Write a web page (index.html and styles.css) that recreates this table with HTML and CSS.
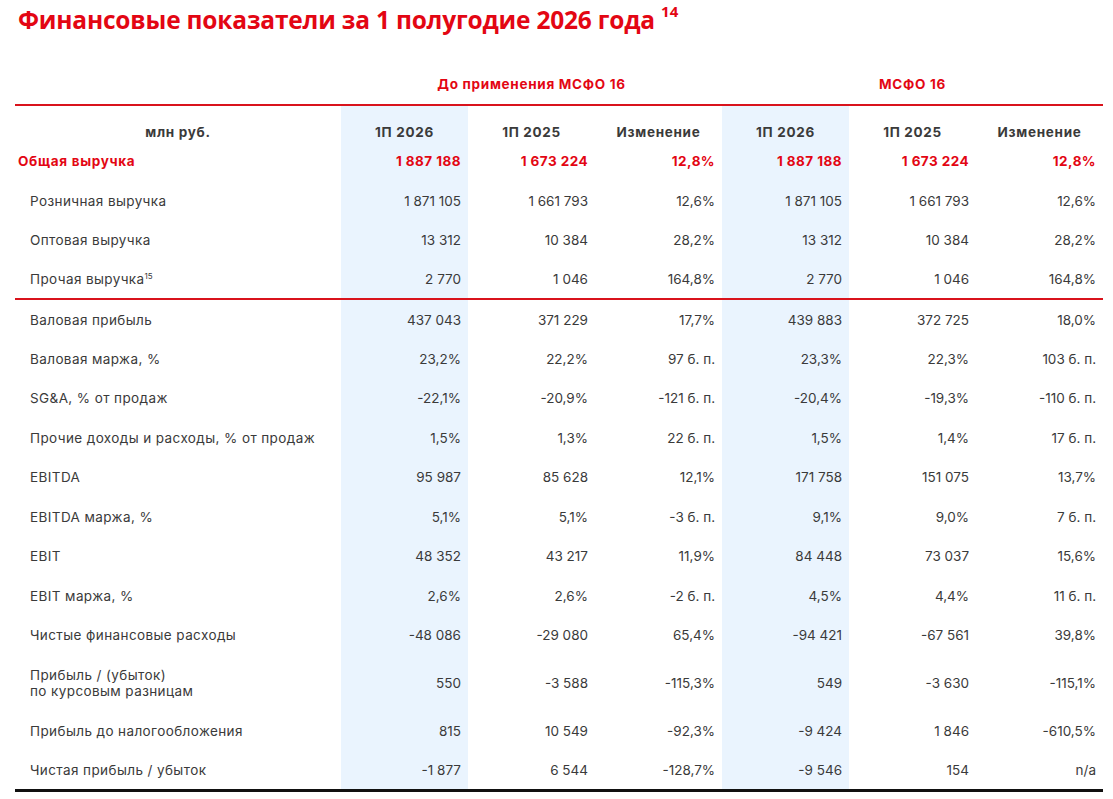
FILE: index.html
```html
<!DOCTYPE html>
<html lang="ru">
<head>
<meta charset="utf-8">
<title>Финансовые показатели</title>
<link rel="stylesheet" href="styles.css">
</head>
<body>
<h1 class="title">Финансовые показатели за 1 полугодие 2026 года <sup class="fn">14</sup></h1>
<table class="fin">
  <colgroup>
    <col class="c-label">
    <col class="c-num"><col class="c-num"><col class="c-num">
    <col class="c-num"><col class="c-num"><col class="c-num">
  </colgroup>
  <thead>
    <tr class="group">
      <th></th>
      <th colspan="3">До применения МСФО 16</th>
      <th colspan="3">МСФО 16</th>
    </tr>
    <tr class="head">
      <th class="unit">млн руб.</th>
      <th class="hl">1П 2026</th><th>1П 2025</th><th>Изменение</th>
      <th class="hl">1П 2026</th><th>1П 2025</th><th>Изменение</th>
    </tr>
  </thead>
  <tbody>
    <tr class="total">
      <td class="lbl main">Общая выручка</td>
      <td class="hl">1 887 188</td><td>1 673 224</td><td>12,8%</td>
      <td class="hl">1 887 188</td><td>1 673 224</td><td>12,8%</td>
    </tr>
    <tr>
      <td class="lbl">Розничная выручка</td>
      <td class="hl">1 871 105</td><td>1 661 793</td><td>12,6%</td>
      <td class="hl">1 871 105</td><td>1 661 793</td><td>12,6%</td>
    </tr>
    <tr>
      <td class="lbl">Оптовая выручка</td>
      <td class="hl">13 312</td><td>10 384</td><td>28,2%</td>
      <td class="hl">13 312</td><td>10 384</td><td>28,2%</td>
    </tr>
    <tr class="sep">
      <td class="lbl">Прочая выручка<sup class="sm">15</sup></td>
      <td class="hl">2 770</td><td>1 046</td><td>164,8%</td>
      <td class="hl">2 770</td><td>1 046</td><td>164,8%</td>
    </tr>
    <tr>
      <td class="lbl">Валовая прибыль</td>
      <td class="hl">437 043</td><td>371 229</td><td>17,7%</td>
      <td class="hl">439 883</td><td>372 725</td><td>18,0%</td>
    </tr>
    <tr>
      <td class="lbl">Валовая маржа, %</td>
      <td class="hl">23,2%</td><td>22,2%</td><td>97 б. п.</td>
      <td class="hl">23,3%</td><td>22,3%</td><td>103 б. п.</td>
    </tr>
    <tr>
      <td class="lbl">SG&amp;A, % от продаж</td>
      <td class="hl">-22,1%</td><td>-20,9%</td><td>-121 б. п.</td>
      <td class="hl">-20,4%</td><td>-19,3%</td><td>-110 б. п.</td>
    </tr>
    <tr>
      <td class="lbl">Прочие доходы и расходы, % от продаж</td>
      <td class="hl">1,5%</td><td>1,3%</td><td>22 б. п.</td>
      <td class="hl">1,5%</td><td>1,4%</td><td>17 б. п.</td>
    </tr>
    <tr>
      <td class="lbl">EBITDA</td>
      <td class="hl">95 987</td><td>85 628</td><td>12,1%</td>
      <td class="hl">171 758</td><td>151 075</td><td>13,7%</td>
    </tr>
    <tr>
      <td class="lbl">EBITDA маржа, %</td>
      <td class="hl">5,1%</td><td>5,1%</td><td>-3 б. п.</td>
      <td class="hl">9,1%</td><td>9,0%</td><td>7 б. п.</td>
    </tr>
    <tr>
      <td class="lbl">EBIT</td>
      <td class="hl">48 352</td><td>43 217</td><td>11,9%</td>
      <td class="hl">84 448</td><td>73 037</td><td>15,6%</td>
    </tr>
    <tr>
      <td class="lbl">EBIT маржа, %</td>
      <td class="hl">2,6%</td><td>2,6%</td><td>-2 б. п.</td>
      <td class="hl">4,5%</td><td>4,4%</td><td>11 б. п.</td>
    </tr>
    <tr>
      <td class="lbl">Чистые финансовые расходы</td>
      <td class="hl">-48 086</td><td>-29 080</td><td>65,4%</td>
      <td class="hl">-94 421</td><td>-67 561</td><td>39,8%</td>
    </tr>
    <tr class="tall">
      <td class="lbl">Прибыль / (убыток)<br>по курсовым разницам</td>
      <td class="hl">550</td><td>-3 588</td><td>-115,3%</td>
      <td class="hl">549</td><td>-3 630</td><td>-115,1%</td>
    </tr>
    <tr>
      <td class="lbl">Прибыль до налогообложения</td>
      <td class="hl">815</td><td>10 549</td><td>-92,3%</td>
      <td class="hl">-9 424</td><td>1 846</td><td>-610,5%</td>
    </tr>
    <tr class="last">
      <td class="lbl">Чистая прибыль / убыток</td>
      <td class="hl">-1 877</td><td>6 544</td><td>-128,7%</td>
      <td class="hl">-9 546</td><td>154</td><td>n/a</td>
    </tr>
  </tbody>
</table>
</body>
</html>
```

FILE: styles.css
```css
html, body {
  margin: 0;
  padding: 0;
  background: #ffffff;
}

body {
  font-family: "Inter", "Open Sans", "Liberation Sans", sans-serif;
  color: #3a3a3a;
}

.title {
  margin: 0;
  padding: 4px 0 0 18px;
  height: 56px;
  box-sizing: border-box;
  font-family: "Open Sans", "Liberation Sans", sans-serif;
  font-weight: 700;
  font-size: 24.5px;
  line-height: 32px;
  color: #e30613;
  letter-spacing: -0.2px;
}

.fn {
  font-size: 15px;
  vertical-align: 0;
  position: relative;
  top: -12px;
  letter-spacing: 0;
}

.fin {
  margin-left: 15px;
  border-collapse: collapse;
  table-layout: fixed;
  width: 1088px;
  font-size: 13.5px;
}

.c-label { width: 326px; }
.c-num { width: 127px; }

.fin th, .fin td {
  padding: 0 7px 0 0;
  text-align: right;
  white-space: nowrap;
}

.group th {
  height: 49px;
  box-sizing: border-box;
  padding: 20px 0 0 0;
  text-align: center;
  vertical-align: top;
  color: #e30613;
  font-weight: 700;
  font-size: 13.5px;
  letter-spacing: 0.7px;
  border-bottom: 2px solid #d9131c;
}

.head th {
  height: 36px;
  box-sizing: border-box;
  padding: 18px 0 0 0;
  vertical-align: top;
  text-align: center;
  font-weight: 700;
  letter-spacing: 0.7px;
  color: #3a3a3a;
}

.hl {
  background: #eaf4fe;
}

.fin td {
  height: 39px;
  box-sizing: border-box;
  vertical-align: middle;
}

.fin tbody tr:nth-child(odd) td {
  height: 40px;
}

.lbl {
  text-align: left !important;
  padding-left: 15px !important;
  letter-spacing: 0.4px;
}

.lbl.main {
  padding-left: 3px !important;
}

.total td {
  color: #e30613;
  font-weight: 700;
  letter-spacing: 0.45px;
}

.total td.lbl {
  letter-spacing: 0.7px;
}

.sep td {
  border-bottom: 2px solid #d9131c;
}

.fin tbody tr.tall td {
  height: 56px;
  line-height: 16px;
}

.last td {
  border-bottom: 3px solid #111111;
}

.sm {
  font-size: 8px;
  vertical-align: 0;
  position: relative;
  top: -5px;
  letter-spacing: 0;
}
```
